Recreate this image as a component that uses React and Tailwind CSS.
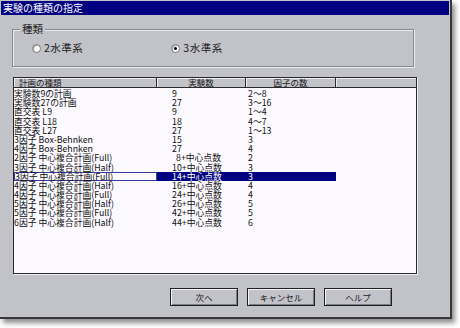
import React from "react";

const rows = [
  ["実験数9の計画", "9", "2〜8"],
  ["実験数27の計画", "27", "3〜16"],
  ["直交表 L9", "9", "1〜4"],
  ["直交表 L18", "18", "4〜7"],
  ["直交表 L27", "27", "1〜13"],
  ["3因子 Box-Behnken", "15", "3"],
  ["4因子 Box-Behnken", "27", "4"],
  ["2因子 中心複合計画(Full)", "8+中心点数", "2", 4],
  ["3因子 中心複合計画(Half)", "10+中心点数", "3"],
  ["3因子 中心複合計画(Full)", "14+中心点数", "3", 0, true],
  ["4因子 中心複合計画(Half)", "16+中心点数", "4"],
  ["4因子 中心複合計画(Full)", "24+中心点数", "4"],
  ["5因子 中心複合計画(Half)", "26+中心点数", "5"],
  ["5因子 中心複合計画(Full)", "42+中心点数", "5"],
  ["6因子 中心複合計画(Half)", "44+中心点数", "6"],
];

function Radio({ checked, label }) {
  return (
    <div className="flex items-center gap-[3px]">
      <div className="w-[9px] h-[9px] rounded-full bg-white border border-[#7a7a80] shadow-[inset_1px_1px_1px_rgba(0,0,0,0.35)] flex items-center justify-center">
        {checked && <div className="w-[3px] h-[3px] rounded-full bg-black" />}
      </div>
      <span className="text-[10.5px] leading-[12px] tracking-[0.5px] text-[#202020]">{label}</span>
    </div>
  );
}

function Btn({ children }) {
  return (
    <div className="w-[68px] h-[18px] border border-[#202020] bg-[#c2c2c9] shadow-[inset_1px_1px_0_#f4f4f8,inset_-1px_-1px_0_#7c7c84] flex items-center justify-center text-[8.5px] leading-[10px] text-[#202020]">
      {children}
    </div>
  );
}

export default function App() {
  return (
    <div
      className="w-[460px] h-[328px] bg-white"
      style={{ fontFamily: '"Noto Sans CJK JP", "Noto Sans", sans-serif' }}
    >
      <div className="w-[452px] h-[319px] bg-[#c2c2c9] border-r-2 border-b-2 border-[#38383c] shadow-[3px_4px_5px_rgba(0,0,0,0.45)] flex flex-col">
        <div className="h-[14px] mt-[1px] mx-[1px] bg-[#000080] text-white text-[10px] leading-[14px] pl-[2px]">
          実験の種類の指定
        </div>

        <div className="relative ml-[12px] mt-[14px] w-[402px] h-[38px] border border-[#8a8a92] shadow-[1px_1px_0_#ececf0,inset_1px_1px_0_#ececf0]">
          <span className="absolute left-[7px] top-[-8px] bg-[#c2c2c9] px-[2px] text-[10.5px] leading-[14px] text-[#202020]">
            種類
          </span>
          <div className="flex items-center pl-[19px] pt-[12px] gap-[88px]">
            <Radio label="2水準系" />
            <Radio checked label="3水準系" />
          </div>
        </div>

        <div className="ml-[13px] mt-[10px] w-[404px] h-[197px] border border-[#2a2a2e] bg-[#fcfaff] shadow-[1px_1px_0_#f0f0f4] flex flex-col overflow-hidden">
          <div className="flex h-[10px] bg-[#c2c2c9] border-b border-[#2a2a2e] text-[8.5px] leading-[9px] text-[#202020]">
            <div className="w-[143px] border-r border-[#2a2a2e] pl-[5px] shadow-[inset_1px_1px_0_#eeeef2]">計画の種類</div>
            <div className="w-[89px] border-r border-[#2a2a2e] text-center shadow-[inset_1px_1px_0_#eeeef2]">実験数</div>
            <div className="w-[90px] border-r border-[#2a2a2e] text-center shadow-[inset_1px_1px_0_#eeeef2]">因子の数</div>
            <div className="flex-1 shadow-[inset_1px_1px_0_#eeeef2]" />
          </div>
          <div className="flex flex-col pt-[1px] text-[8.8px] text-[#111111]">
            {rows.map(([a, b, c, off, sel], i) => (
              <div key={i} className="flex h-[9.2px] leading-[9.2px] whitespace-nowrap">
                <div
                  className={
                    "w-[143px] " +
                    (sel ? "border border-[#3a3a9a] leading-[7.2px]" : "")
                  }
                >
                  {a}
                </div>
                <div
                  className={"w-[90px] " + (sel ? "bg-[#000080] text-white" : "")}
                  style={{ paddingLeft: 15 + (off || 0) }}
                >
                  {b}
                </div>
                <div className={"w-[89px] pl-[1px] " + (sel ? "bg-[#000080] text-white" : "")}>{c}</div>
              </div>
            ))}
          </div>
        </div>

        <div className="flex gap-[9px] ml-[170px] mt-[14px]">
          <Btn>次へ</Btn>
          <Btn>キャンセル</Btn>
          <Btn>ヘルプ</Btn>
        </div>
      </div>
    </div>
  );
}
